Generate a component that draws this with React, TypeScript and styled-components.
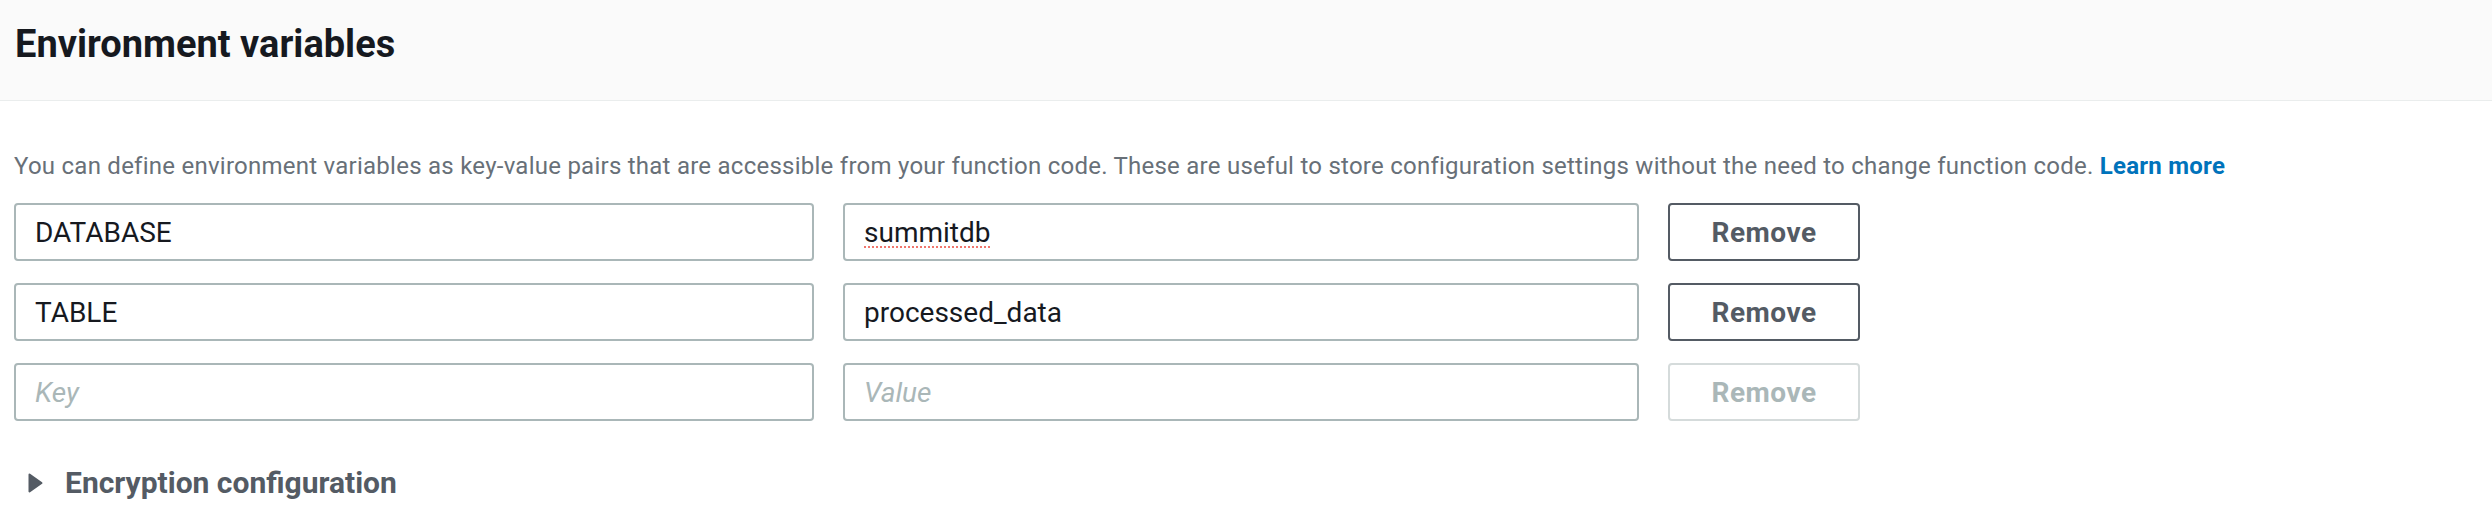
import React from "react";
import styled, { createGlobalStyle } from "styled-components";

const GlobalStyle = createGlobalStyle`
  html, body {
    margin: 0;
    padding: 0;
    background: #ffffff;
  }
  body {
    font-family: Roboto, "Liberation Sans", Arial, sans-serif;
    color: #16191f;
  }
`;

const Panel = styled.section`
  width: 2492px;
  height: 524px;
  background: #ffffff;
  overflow: hidden;
`;

const Header = styled.header`
  height: 101px;
  box-sizing: border-box;
  background: #fafafa;
  border-bottom: 1px solid #eaeded;
  padding: 22px 15px 0;
`;

const Title = styled.h2`
  margin: 0;
  font-size: 38px;
  line-height: 44px;
  font-weight: 700;
  color: #16191f;
`;

const Body = styled.div`
  padding: 49px 14px 0;
`;

const Description = styled.p`
  margin: 0 0 21px;
  font-size: 24px;
  line-height: 32px;
  letter-spacing: 0.25px;
  color: #687078;
`;

const LearnMore = styled.a`
  color: #0073bb;
  font-weight: 700;
  text-decoration: none;
`;

const Rows = styled.div`
  display: flex;
  flex-direction: column;
  gap: 22px;
`;

const Row = styled.div`
  display: grid;
  grid-template-columns: 800px 796px 192px;
  column-gap: 29px;
`;

const Field = styled.div<{ $placeholder?: boolean }>`
  height: 58px;
  box-sizing: border-box;
  border: 2px solid #aab7b8;
  border-radius: 4px;
  padding: 0 19px;
  display: flex;
  align-items: center;
  font-size: 28px;
  color: ${(p) => (p.$placeholder ? "#aab7b8" : "#16191f")};
  font-style: ${(p) => (p.$placeholder ? "italic" : "normal")};
  background: #ffffff;
`;

const Misspelled = styled.span`
  text-decoration: underline dotted #f0766d;
  text-decoration-thickness: 2px;
  text-underline-offset: 5px;
`;

const RemoveButton = styled.button<{ $disabled?: boolean }>`
  height: 58px;
  box-sizing: border-box;
  border: 2px solid ${(p) => (p.$disabled ? "#d5dbdb" : "#545b64")};
  border-radius: 4px;
  background: #ffffff;
  color: ${(p) => (p.$disabled ? "#aab7b8" : "#545b64")};
  font-family: inherit;
  font-size: 28px;
  letter-spacing: 0.5px;
  font-weight: 700;
  cursor: ${(p) => (p.$disabled ? "default" : "pointer")};
  padding: 0;
`;

const Expander = styled.div`
  margin-top: 44px;
  display: flex;
  align-items: center;
  gap: 22px;
  padding-left: 14px;
  color: #545b64;
  font-size: 30px;
  line-height: 36px;
  font-weight: 700;
`;

const Caret = styled.svg`
  width: 15px;
  height: 20px;
  flex: none;
`;

type Env = { key: string; value: string; misspelled?: boolean };

const envs: Env[] = [
  { key: "DATABASE", value: "summitdb", misspelled: true },
  { key: "TABLE", value: "processed_data" },
];

export default function App() {
  return (
    <>
      <GlobalStyle />
      <Panel>
        <Header>
          <Title>Environment variables</Title>
        </Header>
        <Body>
          <Description>
            You can define environment variables as key-value pairs that are accessible from your function
            code. These are useful to store configuration settings without the need to change function code.{" "}
            <LearnMore href="#">Learn more</LearnMore>
          </Description>
          <Rows>
            {envs.map((e) => (
              <Row key={e.key}>
                <Field>{e.key}</Field>
                <Field>{e.misspelled ? <Misspelled>{e.value}</Misspelled> : e.value}</Field>
                <RemoveButton>Remove</RemoveButton>
              </Row>
            ))}
            <Row>
              <Field $placeholder>Key</Field>
              <Field $placeholder>Value</Field>
              <RemoveButton $disabled disabled>
                Remove
              </RemoveButton>
            </Row>
          </Rows>
          <Expander>
            <Caret viewBox="0 0 15 20">
              <path d="M1.5 1.5 L13.5 10 L1.5 18.5 Z" fill="#545b64" stroke="#545b64" strokeWidth="2" strokeLinejoin="round" />
            </Caret>
            Encryption configuration
          </Expander>
        </Body>
      </Panel>
    </>
  );
}
